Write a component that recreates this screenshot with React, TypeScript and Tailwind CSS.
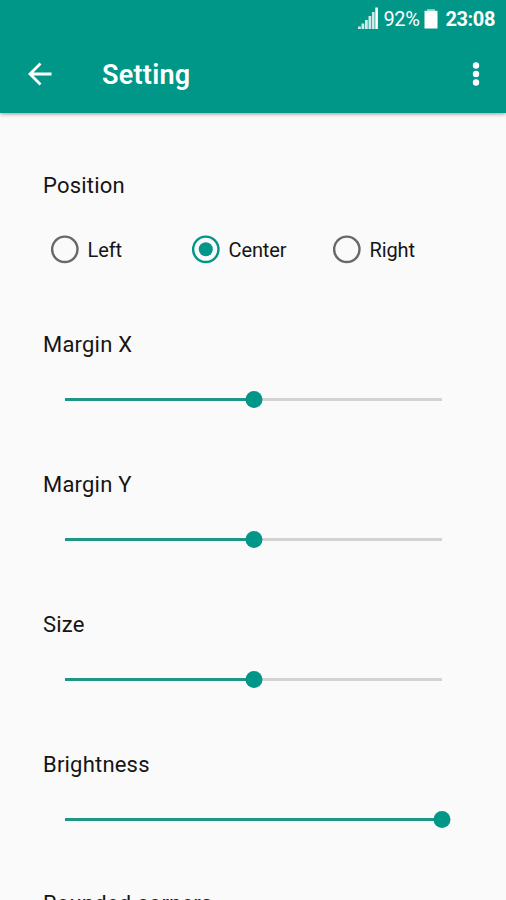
import { useState } from 'react';

type Position = 'left' | 'center' | 'right';

const POSITIONS: { value: Position; label: string }[] = [
  { value: 'left', label: 'Left' },
  { value: 'center', label: 'Center' },
  { value: 'right', label: 'Right' },
];

function StatusBar() {
  return (
    <div className="flex h-[38px] items-center justify-end pr-[11px] text-white">
      <svg className="mr-[5px] mb-[3px] h-[22px] w-[20px]" viewBox="0 0 20 22" fill="currentColor">
        <path
          d="M0 19.500h2.800v2.500h-2.800zM3.500 16.500h2.800v5.500h-2.800zM7 13h2.800v9h-2.800zM10.500 9h2.800v13h-2.800zM14 5h2.600v17h-2.600z"
          opacity="0.8"
        />
        <path d="M17.300 0.500h2.600v21.500h-2.600z" />
      </svg>
      <span className="w-[38px] text-[20px] leading-6 tracking-[-0.4px] whitespace-nowrap">92%</span>
      <svg className="mr-[7px] ml-[3px] h-[20px] w-[14px]" viewBox="0 0 14 20" fill="currentColor">
        <path d="M3 0h8v2H3z" opacity="0.5" />
        <path d="M0.500 1.800h13V19.500h-13z" />
      </svg>
      <span className="text-[20px] leading-6 font-bold tracking-[-0.4px]">23:08</span>
    </div>
  );
}

function Toolbar() {
  return (
    <div className="flex h-[74px] items-center text-white">
      <button className="mb-[2px] ml-[28px]" aria-label="Back">
        <svg className="h-6 w-6" viewBox="0 0 24 24" fill="none" stroke="currentColor" strokeWidth={2.8}>
          <path d="M23.500 12H3M12.500 1.500L2 12l10.500 10.500" />
        </svg>
      </button>
      <h1 className="ml-[50px] text-[27px] leading-8 font-semibold tracking-[0.25px]">Setting</h1>
      <button className="mr-[26px] mb-[2px] ml-auto" aria-label="More options">
        <svg className="h-6 w-[8px]" viewBox="0 0 8 24" fill="currentColor">
          <circle cx="4" cy="3.500" r="3.200" />
          <circle cx="4" cy="12" r="3.200" />
          <circle cx="4" cy="20.500" r="3.200" />
        </svg>
      </button>
    </div>
  );
}

interface RadioProps {
  label: string;
  checked: boolean;
  onSelect: () => void;
}

function Radio({ label, checked, onSelect }: RadioProps) {
  return (
    <button role="radio" aria-checked={checked} onClick={onSelect} className="flex items-center gap-[8.500px]">
      <svg
        className={`h-[29px] w-[28px] ${checked ? 'text-[#009688]' : 'text-[#686868]'}`}
        viewBox="0 0 28 29"
        fill="none"
        stroke="currentColor"
      >
        <circle cx="13.800" cy="14.300" r="12.700" strokeWidth={2.4} />
        {checked && <circle cx="13.800" cy="14.300" r="7" fill="currentColor" stroke="none" />}
      </svg>
      <span className="pt-px text-[20px] leading-7 tracking-[-0.1px]">{label}</span>
    </button>
  );
}

interface SliderSettingProps {
  label: string;
  value: number;
}

function SliderSetting({ label, value }: SliderSettingProps) {
  return (
    <section>
      <h2 className="text-[22px] leading-7 tracking-[0.2px]">{label}</h2>
      <div className="relative mt-[31px] mr-[21px] ml-[22px] flex h-[18px] items-center">
        <div className="h-[3px] w-full bg-[#d3d3d3]">
          <div className="h-full bg-[#1f9586]" style={{ width: `${value}%` }} />
        </div>
        <div
          className="absolute h-[17px] w-[17px] -translate-x-1/2 rounded-full bg-[#009688]"
          style={{ left: `${value}%` }}
        />
      </div>
    </section>
  );
}

export default function App() {
  const [position, setPosition] = useState<Position>('center');

  return (
    <div className="flex h-[900px] w-[506px] flex-col overflow-hidden bg-[#fafafa] font-['Roboto',sans-serif] text-[#151515]">
      <header className="z-10 shrink-0 bg-[#009688] pb-[0.500px] shadow-[0_1px_4px_rgba(0,0,0,0.4)]">
        <StatusBar />
        <Toolbar />
      </header>

      <main className="px-[43px] pt-[59.500px]">
        <h2 className="text-[22px] leading-7 tracking-[0.2px]">Position</h2>
        <div role="radiogroup" className="mt-[35px] mb-[67px] ml-[8px] grid h-[29px] grid-cols-[141px_141px_1fr]">
          {POSITIONS.map(({ value, label }) => (
            <Radio
              key={value}
              label={label}
              checked={position === value}
              onSelect={() => setPosition(value)}
            />
          ))}
        </div>

        <div className="flex flex-col gap-[63px]">
          <SliderSetting label="Margin X" value={50} />
          <SliderSetting label="Margin Y" value={50} />
          <SliderSetting label="Size" value={50} />
          <SliderSetting label="Brightness" value={100} />
          <div className="-mt-px">
            <SliderSetting label="Rounded corners" value={50} />
          </div>
        </div>
      </main>
    </div>
  );
}
